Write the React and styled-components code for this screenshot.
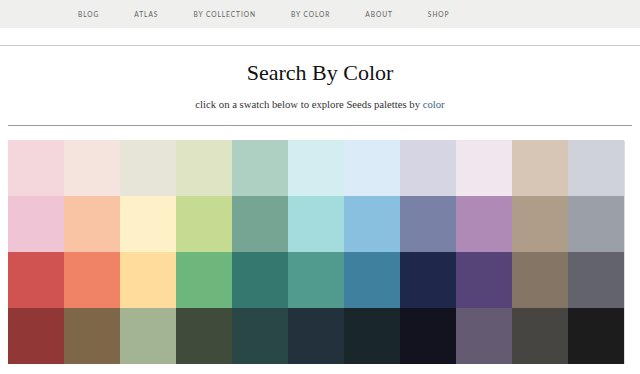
import React from 'react'
import styled, { createGlobalStyle } from 'styled-components'

const GlobalStyle = createGlobalStyle`
    body {
        margin: 0;
        background: #ffffff;
        font-family: "Liberation Serif", serif;
    }
`

const Nav = styled.nav`
    height: 28px;
    background: #efefed;
    display: flex;
    align-items: center;
    padding-left: 78px;
    gap: 35px;
`

const NavItem = styled.a`
    font-family: Lato, "DejaVu Sans", sans-serif;
    font-size: 6.6px;
    letter-spacing: 0.95px;
    text-transform: uppercase;
    color: #5e5e5e;
    text-decoration: none;
`

const HeaderRule = styled.div`
    height: 17px;
    border-bottom: 1px solid #cccccc;
`

const Intro = styled.header`
    text-align: center;
    padding-top: 12px;
`

const Title = styled.h1`
    margin: 0;
    font-family: "Liberation Serif", serif;
    font-weight: normal;
    font-size: 22px;
    line-height: 30px;
    color: #111;
`

const Subtitle = styled.p`
    margin: 9px 0 0;
    font-size: 10.7px;
    line-height: 14px;
    color: #333;
`

const ColorLink = styled.a`
    color: #3b5f86;
    text-decoration: none;
`

const Divider = styled.hr`
    margin: 14px 8px 0;
    border: 0;
    border-top: 1px solid #999;
`

const Grid = styled.div`
    margin: 14px 8px 0;
    width: 616px;
    display: grid;
    grid-template-columns: repeat(11, 56px);
    grid-auto-rows: 56px;
    box-shadow: 1px 1px 0 #ddd;
`

const Swatch = styled.a`
    display: block;
    background: ${p => p.$color};
`

const navLinks = ['Blog', 'Atlas', 'By Collection', 'By Color', 'About', 'Shop']

const swatches = [
    '#f4d7dc', '#f5e3de', '#e7e4d8', '#dfe4c4', '#aed0c3', '#d2eef0', '#dbecf8', '#d5d5e4', '#f0e6ee', '#d7c6b5', '#cfd2db',
    '#efc4d5', '#f8c4a3', '#fef1c8', '#c6db92', '#77a593', '#a4dbdc', '#89bfdf', '#7a81a7', '#b08ab6', '#b09d89', '#9b9fa8',
    '#d05352', '#f08366', '#fedd9c', '#6db77d', '#357870', '#509b8e', '#40809f', '#1f274b', '#564478', '#857565', '#63636d',
    '#913837', '#7e6649', '#a3b492', '#404b3b', '#294744', '#23313d', '#19272a', '#12131f', '#645b73', '#464542', '#1c1c1c',
]

export default function App() {
    return (
        <>
            <GlobalStyle />
            <Nav>
                {navLinks.map(link => (
                    <NavItem key={link} href="#">{link}</NavItem>
                ))}
            </Nav>
            <HeaderRule />
            <Intro>
                <Title>Search By Color</Title>
                <Subtitle>
                    click on a swatch below to explore Seeds palettes by <ColorLink href="#">color</ColorLink>
                </Subtitle>
            </Intro>
            <Divider />
            <Grid>
                {swatches.map((c, i) => (
                    <Swatch key={i} href="#" $color={c} />
                ))}
            </Grid>
        </>
    )
}
